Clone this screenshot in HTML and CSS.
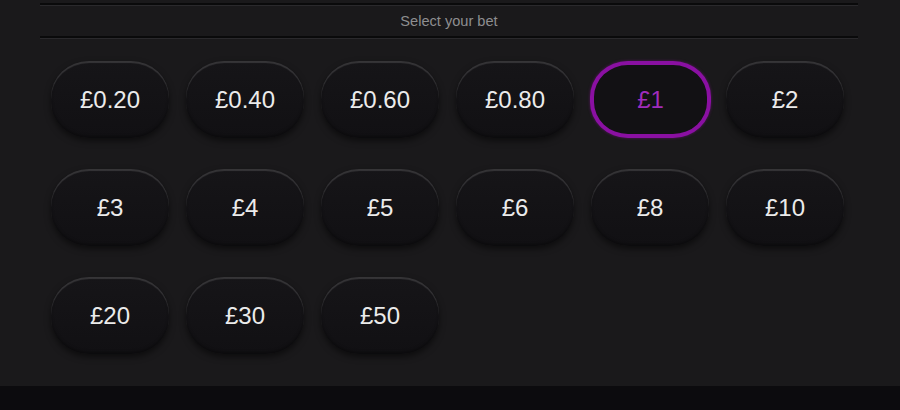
FILE: index.html
```html
<!DOCTYPE html>
<html lang="en">
<head>
    <meta charset="UTF-8">
    <title>Select your bet</title>
    <link rel="stylesheet" href="styles.css">
</head>
<body>

<div class="bet-panel">
    <div class="bet-header">Select your bet</div>

    <div class="chip-grid">
        <button class="chip">£0.20</button>
        <button class="chip">£0.40</button>
        <button class="chip">£0.60</button>
        <button class="chip">£0.80</button>
        <button class="chip selected">£1</button>
        <button class="chip">£2</button>
        <button class="chip">£3</button>
        <button class="chip">£4</button>
        <button class="chip">£5</button>
        <button class="chip">£6</button>
        <button class="chip">£8</button>
        <button class="chip">£10</button>
        <button class="chip">£20</button>
        <button class="chip">£30</button>
        <button class="chip">£50</button>
    </div>
</div>

<div class="footer-bar"></div>

</body>
</html>
```

FILE: styles.css
```css
body {
    font-family: 'Liberation Sans', Arial, sans-serif;
    margin: 0;
    padding: 0;
    height: 410px;
    overflow: hidden;
    background-color: #1a191b;
    display: flex;
    flex-direction: column;
}

.bet-panel {
    height: 386px;
    padding: 3px 42px 0 40px;
    box-sizing: border-box;
}

.bet-header {
    height: 31px;
    border-top: 2px solid #0a0a0b;
    border-bottom: 2px solid #0a0a0b;
    box-shadow: inset 0 1px 0 #2a292c, 0 1px 0 #2a292c;
    color: #8e8e90;
    font-size: 14.6px;
    line-height: 32px;
    text-align: center;
}

.chip-grid {
    display: grid;
    grid-template-columns: repeat(6, 118px);
    column-gap: 17px;
    row-gap: 31px;
    padding: 23px 0 0 11px;
}

.chip {
    height: 77px;
    border: none;
    border-radius: 38px / 36px;
    background: linear-gradient(#161518, #111013);
    color: #ebebeb;
    font-family: 'Liberation Sans', Arial, sans-serif;
    font-size: 24px;
    box-shadow: inset 0 2px 1px rgba(255, 255, 255, 0.14),
                inset 0 -2px 3px rgba(0, 0, 0, 0.35),
                0 3px 6px rgba(0, 0, 0, 0.5);
    cursor: pointer;
}

.chip.selected {
    width: 121px;
    margin-left: -1px;
    border: 4px solid #8a10a2;
    background: #121114;
    color: #a02cbc;
    box-shadow: 0 0 3px rgba(150, 20, 170, 0.5);
}

.footer-bar {
    flex: 1;
    background-color: #0c0b0e;
}
```
